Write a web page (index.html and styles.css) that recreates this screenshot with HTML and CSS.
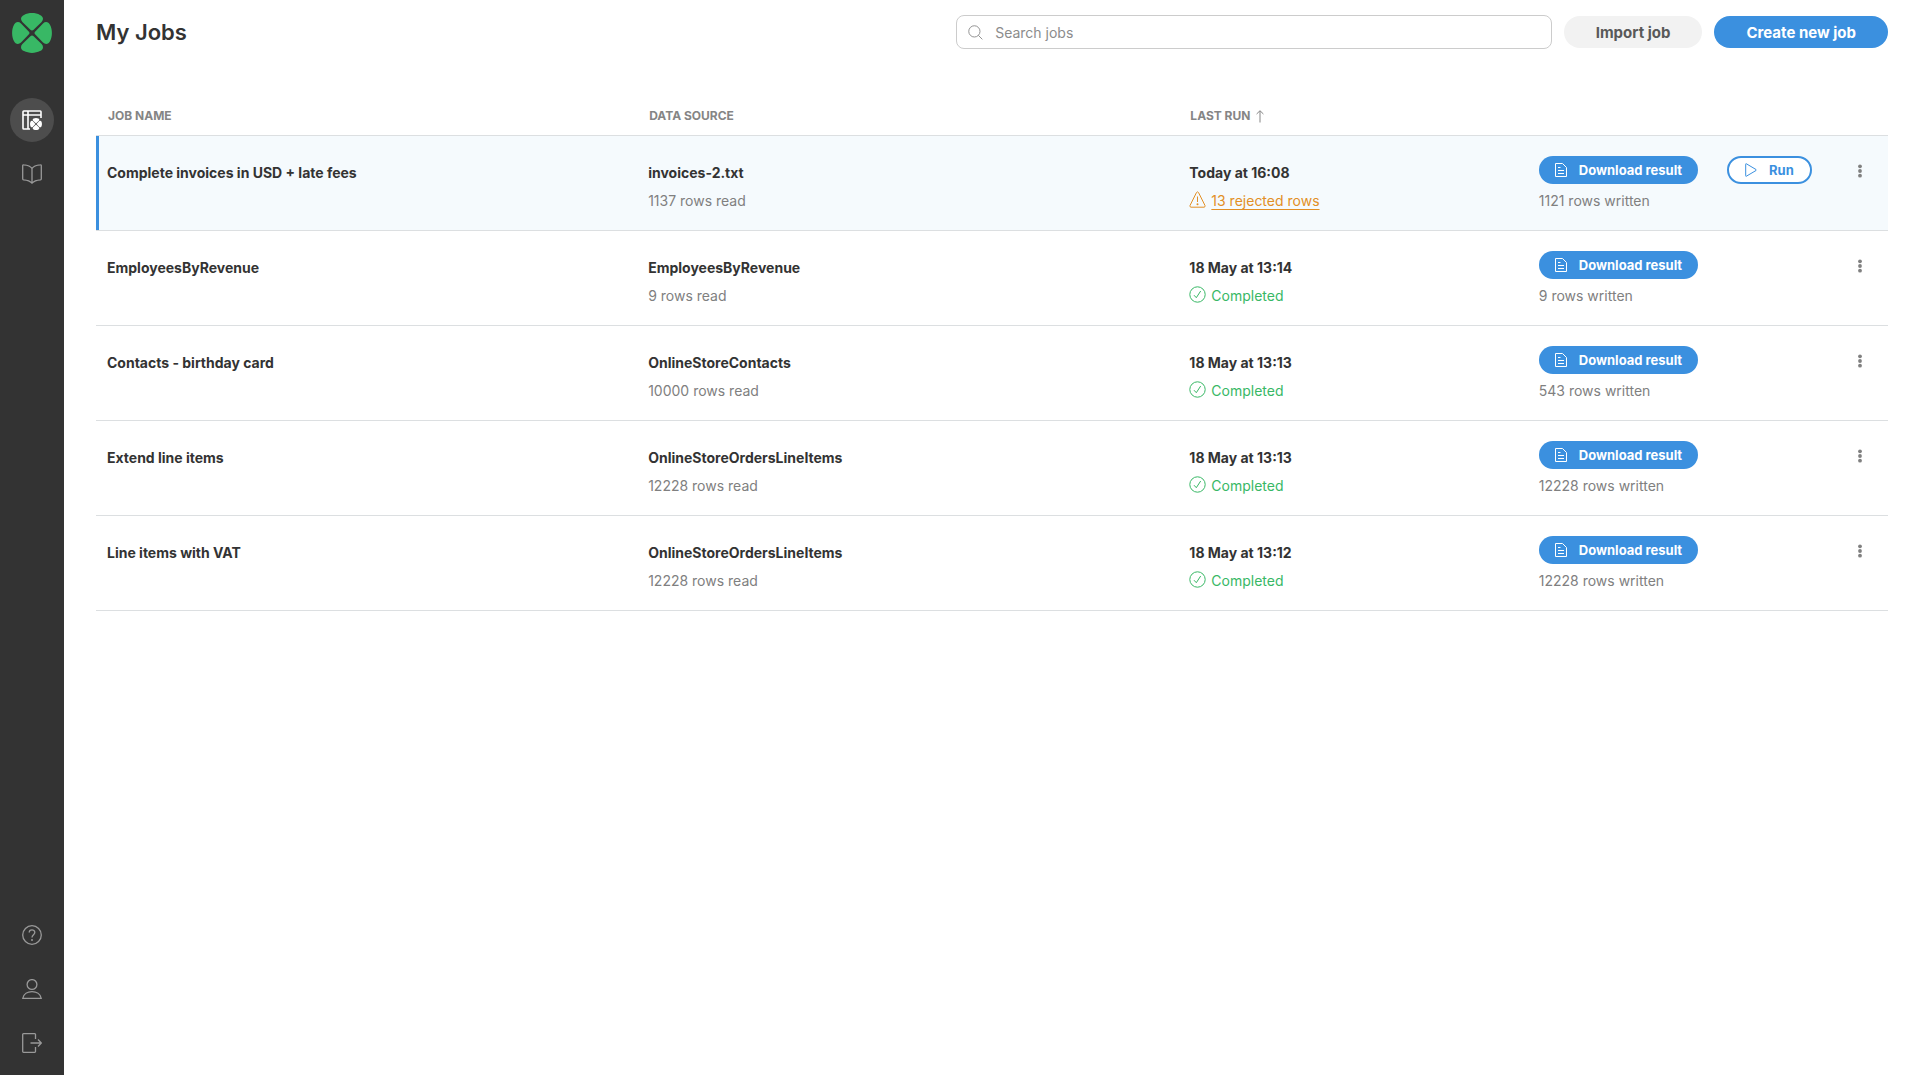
FILE: index.html
```html
<!DOCTYPE html>
<html lang="en">
<head>
<meta charset="utf-8">
<meta name="viewport" content="width=device-width, initial-scale=1">
<title>My Jobs</title>
<link rel="stylesheet" href="styles.css">
</head>
<body>
<svg class="defs" aria-hidden="true">
  <symbol id="leaf" viewBox="0 0 40 40"><path d="M20 17.5Q19.2 17.5 18.4 16.7L10.4 9C8 6.4 8.8 3.4 12 1.9C16.5-.5 23.500-.5 28 1.900C31.200 3.400 32 6.400 29.600 9L21.600 16.700Q20.800 17.500 20 17.500Z"/></symbol>
  <symbol id="doc" viewBox="0 0 12 14"><path d="M.5.500H7.500L11.500 4.500V13.500H.5ZM3 4.500H5.500M3 7.500H9M3 10.500H9"/></symbol>
  <symbol id="check" viewBox="0 0 17 17"><circle cx="8.500" cy="8.500" r="7.700"/><path d="M5 9.200L7.300 11.700L11.700 5"/></symbol>
  <symbol id="dots" viewBox="0 0 4 14"><circle cx="2" cy="2.300" r="1.900"/><circle cx="2" cy="7" r="1.900"/><circle cx="2" cy="11.700" r="1.900"/></symbol>
</svg>
<div class="app">
  <nav class="sidebar" aria-label="Main">
    <a class="logo" href="#" aria-label="Home">
      <svg viewBox="0 0 40 40"><use href="#leaf"/><use href="#leaf" transform="rotate(90 20 20)"/><use href="#leaf" transform="rotate(180 20 20)"/><use href="#leaf" transform="rotate(270 20 20)"/></svg>
    </a>
    <a class="nav-item active" href="#" aria-label="Jobs" aria-current="page">
      <svg class="icon-20" viewBox="0 0 20 20"><path class="thick" d="M8 19H1.800Q1 19 1 18.200V1.800Q1 1 1.800 1H18.200Q19 1 19 1.800V8M1 5H19M6 1V19"/><g class="badge" transform="translate(8 8) scale(.3)"><use href="#leaf" width="40" height="40"/><use href="#leaf" width="40" height="40" transform="rotate(90 20 20)"/><use href="#leaf" width="40" height="40" transform="rotate(180 20 20)"/><use href="#leaf" width="40" height="40" transform="rotate(270 20 20)"/></g></svg>
    </a>
    <a class="nav-item" href="#" aria-label="Library">
      <svg class="icon-20" viewBox="0 0 20 20"><path d="M10 4.500Q8 1.200 1.700.800Q.7.700.7 1.700V14.800Q.7 15.700 1.600 15.800Q7.500 16.200 10 19.200Q12.500 16.200 18.400 15.800Q19.300 15.700 19.300 14.800V1.700Q19.300.700 18.300.800Q12 1.200 10 4.500V19"/></svg>
    </a>
    <a class="nav-item push" href="#" aria-label="Help">
      <svg class="icon-20" viewBox="0 0 20 20"><circle cx="10" cy="10" r="9.300"/><path d="M7.200 7.600C7.200 4 12.800 4 12.800 7.500C12.800 9.700 10 9.800 10 12.500"/><circle class="dot" cx="10" cy="15" r="1"/></svg>
    </a>
    <a class="nav-item" href="#" aria-label="Account">
      <svg class="icon-20" viewBox="0 0 20 20"><circle cx="10" cy="5.500" r="4.900"/><path d="M.8 19.300C2.300 10.500 17.700 10.500 19.200 19.300Z"/></svg>
    </a>
    <a class="nav-item" href="#" aria-label="Log out">
      <svg class="icon-20" viewBox="0 0 20 20"><path d="M13.500 6V1.500Q13.500.700 12.700.700H1.500Q.7.700.7 1.500V18.500Q.7 19.300 1.500 19.300H12.700Q13.500 19.300 13.500 18.500V14M8.500 10H19.300M16 6.500L19.300 10L16 13.500"/></svg>
    </a>
  </nav>
  <main class="main">
    <header class="topbar">
      <h1>My Jobs</h1>
      <div class="tools">
        <label class="search">
          <svg viewBox="0 0 16 16" aria-hidden="true"><circle cx="6.800" cy="6.800" r="6"/><path d="M11 11L15.300 15.300"/></svg>
          <input type="search" placeholder="Search jobs" aria-label="Search jobs">
        </label>
        <button class="btn btn-plain" type="button">Import job</button>
        <button class="btn btn-primary" type="button">Create new job</button>
      </div>
    </header>
    <table class="jobs">
      <colgroup><col class="c-wide"><col class="c-wide"><col class="c-run"><col class="c-result"><col class="c-action"><col class="c-menu"></colgroup>
      <thead>
        <tr>
          <th scope="col">JOB NAME</th>
          <th scope="col">DATA SOURCE</th>
          <th scope="col" aria-sort="ascending"><button class="sort" type="button">LAST RUN <svg viewBox="0 0 8 13" aria-hidden="true"><path d="M4 12.500V1M.6 4L4 .700L7.400 4"/></svg></button></th>
          <td></td><td></td><td></td>
        </tr>
      </thead>
      <tbody>
        <tr class="selected">
          <td><div class="name">Complete invoices in USD + late fees</div></td>
          <td><div class="name">invoices-2.txt</div><div class="sub">1137 rows read</div></td>
          <td><div class="name">Today at 16:08</div><div class="status warn"><svg viewBox="0 0 17 17" aria-hidden="true"><path d="M7.500 1.500Q8.500.200 9.500 1.500L16 14.500Q16.500 16 15 16.200H2Q.5 16 1 14.500ZM8.500 5.500V11"/><circle class="dot" cx="8.500" cy="13.300" r="1"/></svg><a href="#">13 rejected rows</a></div></td>
          <td class="result"><button class="pill" type="button"><svg viewBox="0 0 12 14" aria-hidden="true"><use href="#doc"/></svg>Download result</button><div class="sub">1121 rows written</div></td>
          <td class="result"><button class="pill pill-outline" type="button"><svg viewBox="0 0 12 14" aria-hidden="true"><path d="M.7 1.200Q.7.400 1.400.800L11 6.500Q11.600 7 11 7.500L1.400 13.200Q.7 13.600.7 12.800Z"/></svg>Run</button></td>
          <td class="menu"><button class="kebab" type="button" aria-label="More actions"><svg viewBox="0 0 4 14"><use href="#dots"/></svg></button></td>
        </tr>
        <tr>
          <td><div class="name">EmployeesByRevenue</div></td>
          <td><div class="name">EmployeesByRevenue</div><div class="sub">9 rows read</div></td>
          <td><div class="name">18 May at 13:14</div><div class="status done"><svg viewBox="0 0 17 17" aria-hidden="true"><use href="#check"/></svg>Completed</div></td>
          <td class="result"><button class="pill" type="button"><svg viewBox="0 0 12 14" aria-hidden="true"><use href="#doc"/></svg>Download result</button><div class="sub">9 rows written</div></td>
          <td></td>
          <td class="menu"><button class="kebab" type="button" aria-label="More actions"><svg viewBox="0 0 4 14"><use href="#dots"/></svg></button></td>
        </tr>
        <tr>
          <td><div class="name">Contacts - birthday card</div></td>
          <td><div class="name">OnlineStoreContacts</div><div class="sub">10000 rows read</div></td>
          <td><div class="name">18 May at 13:13</div><div class="status done"><svg viewBox="0 0 17 17" aria-hidden="true"><use href="#check"/></svg>Completed</div></td>
          <td class="result"><button class="pill" type="button"><svg viewBox="0 0 12 14" aria-hidden="true"><use href="#doc"/></svg>Download result</button><div class="sub">543 rows written</div></td>
          <td></td>
          <td class="menu"><button class="kebab" type="button" aria-label="More actions"><svg viewBox="0 0 4 14"><use href="#dots"/></svg></button></td>
        </tr>
        <tr>
          <td><div class="name">Extend line items</div></td>
          <td><div class="name">OnlineStoreOrdersLineItems</div><div class="sub">12228 rows read</div></td>
          <td><div class="name">18 May at 13:13</div><div class="status done"><svg viewBox="0 0 17 17" aria-hidden="true"><use href="#check"/></svg>Completed</div></td>
          <td class="result"><button class="pill" type="button"><svg viewBox="0 0 12 14" aria-hidden="true"><use href="#doc"/></svg>Download result</button><div class="sub">12228 rows written</div></td>
          <td></td>
          <td class="menu"><button class="kebab" type="button" aria-label="More actions"><svg viewBox="0 0 4 14"><use href="#dots"/></svg></button></td>
        </tr>
        <tr>
          <td><div class="name">Line items with VAT</div></td>
          <td><div class="name">OnlineStoreOrdersLineItems</div><div class="sub">12228 rows read</div></td>
          <td><div class="name">18 May at 13:12</div><div class="status done"><svg viewBox="0 0 17 17" aria-hidden="true"><use href="#check"/></svg>Completed</div></td>
          <td class="result"><button class="pill" type="button"><svg viewBox="0 0 12 14" aria-hidden="true"><use href="#doc"/></svg>Download result</button><div class="sub">12228 rows written</div></td>
          <td></td>
          <td class="menu"><button class="kebab" type="button" aria-label="More actions"><svg viewBox="0 0 4 14"><use href="#dots"/></svg></button></td>
        </tr>
      </tbody>
    </table>
  </main>
</div>
</body>
</html>
```
FILE: styles.css
```css
* { box-sizing: border-box; }

body {
  margin: 0;
  background: #fff;
  color: #333;
  font: 14px/28px Inter, "Liberation Sans", sans-serif;
}

button, input { font-family: inherit; }
button { border: 0; cursor: pointer; }
svg { display: block; flex: none; fill: none; stroke: currentColor; stroke-width: 1; }
.defs { display: none; }
.dot { fill: currentColor; stroke: none; }

.app { display: flex; min-height: 100vh; }

/* Sidebar */
.sidebar {
  display: flex;
  flex-direction: column;
  align-items: center;
  gap: 10px;
  flex: none;
  width: 64px;
  padding: 13px 0 10px;
  background: #333;
}
.logo { margin-bottom: 35px; color: #38b865; }
.logo svg { width: 40px; height: 40px; fill: currentColor; stroke: none; }
.nav-item {
  display: grid;
  place-items: center;
  width: 44px;
  height: 44px;
  border-radius: 50%;
  color: #999;
}
.nav-item.active { background: #4d4d4d; color: #fff; }
.nav-item.push { margin-top: auto; }
.icon-20 { width: 20px; height: 20px; stroke-width: 1.3; }
.thick { stroke-width: 1.6; }
.badge { fill: currentColor; stroke: none; }

/* Header */
.main { flex: 1; min-width: 0; padding: 0 32px; }
.topbar { display: flex; align-items: center; justify-content: space-between; height: 64px; }
h1 { margin: 0; font-size: 22px; font-weight: 600; }
.tools { display: flex; align-items: center; gap: 12px; width: 52%; }
.search {
  display: flex;
  align-items: center;
  flex: 1;
  gap: 12px;
  height: 34px;
  padding: 0 11px;
  border: 1px solid #ccc;
  border-radius: 8px;
  color: #8c8c8c;
}
.search svg { width: 15px; height: 15px; }
.search input {
  flex: 1;
  min-width: 0;
  padding: 0;
  border: 0;
  outline: 0;
  background: none;
  color: #333;
  font-size: 14px;
}
.search input::placeholder { color: #8c8c8c; opacity: 1; }
.btn {
  height: 32px;
  padding: 0 32px;
  border-radius: 16px;
  font-size: 15px;
  font-weight: 700;
  white-space: nowrap;
}
.btn-plain { background: #f2f2f2; color: #595959; }
.btn-primary { background: #3b90df; color: #fff; }

/* Jobs table */
.jobs {
  width: 100%;
  margin-top: 32px;
  border-collapse: separate;
  border-spacing: 0;
  table-layout: fixed;
}
.c-wide { width: 30.2%; }
.c-run { width: 19.5%; }
.c-action { width: 120px; }
.c-menu { width: 52px; }
.c-result { width: auto; }
.jobs th, .jobs td {
  padding: 0;
  border-bottom: 1px solid #dcdfe1;
  text-align: left;
  vertical-align: top;
}
.jobs th {
  height: 40px;
  padding: 6px 0 0 12px;
  color: #858585;
  font-size: 12px;
  font-weight: 700;
}
.sort {
  display: flex;
  align-items: center;
  gap: 6px;
  padding: 0;
  background: none;
  color: inherit;
  font-size: 12px;
  font-weight: 700;
  line-height: 28px;
}
.sort svg { width: 8px; height: 13px; }
.jobs tbody td { padding: 23px 0 15px 11px; }
.jobs tbody td.result { padding-top: 20px; }
.jobs .selected td { background: #f5fafd; }
.jobs .selected td:first-child { box-shadow: inset 3px 0 #3b90df; }
.name { font-weight: 700; }
.sub { color: #808080; }
.status { display: flex; align-items: center; gap: 5px; }
.status svg { width: 17px; height: 17px; margin-bottom: 4px; }
.warn { color: #e28f25; }
.warn a { color: inherit; text-underline-offset: 3px; }
.done { color: #38b865; }
.pill {
  display: flex;
  align-items: center;
  gap: 12px;
  height: 28px;
  margin-bottom: 3px;
  padding: 0 16px;
  border-radius: 14px;
  background: #3b90df;
  color: #fff;
  font-size: 13px;
  font-weight: 700;
  white-space: nowrap;
}
.pill svg { width: 12px; height: 14px; }
.pill-outline { border: 2px solid #3b90df; background: #fff; color: #3b90df; }
.jobs tbody td.menu { padding: 21px 14px 0; }
.kebab {
  display: grid;
  place-items: center;
  width: 20px;
  height: 28px;
  padding: 0;
  background: none;
  color: #808080;
}
.kebab svg { width: 4px; height: 14px; fill: currentColor; stroke: none; }
```
